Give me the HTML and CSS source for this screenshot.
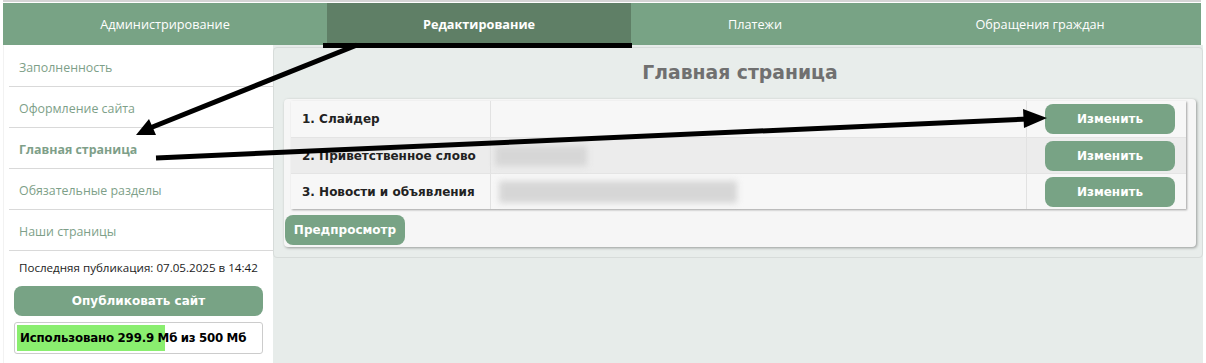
FILE: index.html
```html
<!DOCTYPE html>
<html lang="ru">
<head>
<meta charset="utf-8">
<title>Редактирование</title>
<link rel="stylesheet" href="styles.css">
</head>
<body>
<div class="page">
  <div class="topline"></div>
  <nav class="nav">
    <a class="tab">Администрирование</a>
    <a class="tab active">Редактирование</a>
    <a class="tab">Платежи</a>
    <a class="tab">Обращения граждан</a>
  </nav>
  <div class="layout">
    <aside class="sidebar">
      <ul class="menu">
        <li>Заполненность</li>
        <li>Оформление сайта</li>
        <li class="current">Главная страница</li>
        <li>Обязательные разделы</li>
        <li>Наши страницы</li>
      </ul>
      <div class="pub">Последняя публикация: 07.05.2025 в 14:42</div>
      <button class="btn publish">Опубликовать сайт</button>
      <div class="quota">
        <div class="quota-fill" style="width:59.98%"></div>
        <span class="quota-text">Использовано 299.9 Мб из 500 Мб</span>
      </div>
    </aside>
    <main class="main">
      <section class="box">
        <h1 class="title">Главная страница</h1>
        <div class="panel">
          <div class="table">
            <div class="row">
              <div class="cell name">1. Слайдер</div>
              <div class="cell val"></div>
              <div class="cell act"><button class="btn edit">Изменить</button></div>
            </div>
            <div class="row alt">
              <div class="cell name">2. Приветственное слово</div>
              <div class="cell val"><span class="blur b1"></span></div>
              <div class="cell act"><button class="btn edit">Изменить</button></div>
            </div>
            <div class="row">
              <div class="cell name">3. Новости и объявления</div>
              <div class="cell val"><span class="blur b2"></span></div>
              <div class="cell act"><button class="btn edit">Изменить</button></div>
            </div>
          </div>
          <button class="btn preview">Предпросмотр</button>
        </div>
      </section>
    </main>
  </div>
  <svg class="arrows" width="1206" height="363" viewBox="0 0 1206 363">
    <rect x="323" y="43" width="309" height="5" fill="#000"/>
    <line x1="357" y1="45" x2="150" y2="128" stroke="#000" stroke-width="5"/>
    <polygon points="136,135 156,135 149,119" fill="#000"/>
    <line x1="156" y1="158" x2="1028" y2="119" stroke="#000" stroke-width="5"/>
    <polygon points="1047,118 1024,128 1023,109" fill="#000"/>
  </svg>
</div>
</body>
</html>
```
FILE: styles.css
```css
* { box-sizing: border-box; }
html, body { margin: 0; padding: 0; background: #fff; }
body { font-family: "DejaVu Sans", Verdana, sans-serif; }

.page { position: relative; width: 1206px; height: 363px; overflow: hidden; padding: 0 3px; }

.topline { height: 2px; background: #d4d4d4; margin-right: 2px; }

.nav {
  display: grid;
  grid-template-columns: 324px 304px 248px 1fr;
  height: 42px;
  margin-top: 1px;
  margin-right: 2px;
  background: #78a385;
}
.tab {
  display: flex; align-items: center; justify-content: center;
  color: #fff; font-family: "Open Sans", "Noto Sans", sans-serif; font-size: 12.7px;
}
.tab.active { background: #5f7f66; font-weight: 700; }

.layout { display: flex; height: 318px; }

.sidebar {
  width: 270px; flex: none;
  border-left: 1px solid #f2f2f2;
  font-family: "Open Sans", "Noto Sans", sans-serif;
}
.menu { list-style: none; margin: 0; padding: 0 0 0 5px; }
.menu li {
  height: 41px;
  padding: 13px 0 0 10px;
  font-size: 12.4px;
  color: #7e9f89;
  border-bottom: 1px solid #d9d9d9;
}
.menu li:first-child { height: 42px; padding-top: 14px; }
.menu li.current { font-weight: 700; }

.pub { font-size: 11.6px; color: #1c1c1c; padding: 9px 0 0 15px; height: 35px; }

.btn {
  border: 0; background: #78a385; color: #fff;
  font-family: "DejaVu Sans", Verdana, sans-serif; font-weight: 700;
  border-radius: 8px; cursor: pointer;
}
.publish { display: block; width: 249px; height: 30px; margin-left: 10px; font-size: 12px; }

.quota {
  position: relative;
  width: 249px; height: 32px; margin: 6px 0 0 10px;
  border: 1px solid #cccccc; border-radius: 3px;
  padding: 2px;
  display: flex; align-items: center;
}
.quota-fill { position: absolute; left: 2px; top: 2px; bottom: 2px; background: #8aee6f; }
.quota-text {
  position: relative;
  font-family: "DejaVu Sans", Verdana, sans-serif;
  font-size: 11.8px; font-weight: 700; color: #000;
  padding-left: 3px; white-space: nowrap; letter-spacing: -0.15px; word-spacing: -0.5px;
}

.main { flex: 1; background: #e7ecea; padding-top: 2px; }

.box {
  height: 211px;
  border: 1px solid #d7dcda;
  border-radius: 4px;
  background: #e8edeb;
  padding: 0 6px 0 10px;
}
.title {
  margin: 0; height: 51px;
  text-align: center;
  font-size: 18.8px; font-weight: 700; color: #707070;
  padding-top: 14px;
  font-family: "DejaVu Sans", Verdana, sans-serif;
}

.panel {
  background: #f6f6f6;
  border-radius: 4px;
  box-shadow: 1px 1px 3px rgba(0,0,0,0.35);
  padding: 2px 10px 2px 6px;
  height: 148px;
}
.table {
  margin-left: 1px;
  box-shadow: 1px 1px 2px rgba(0,0,0,0.35);
  background: #f7f7f7;
}
.row { display: grid; grid-template-columns: 199px 1fr 160px; height: 36px; }
.row + .row { border-top: 1px solid #e4e4e4; }
.row.alt { background: #ececec; }
.cell { display: flex; align-items: center; }
.cell + .cell { border-left: 1px solid #e2e2e2; }
.name { padding-left: 11px; font-size: 12px; font-weight: 700; color: #222; }
.val { padding-left: 4px; }
.act { padding-left: 18px; }
.edit { width: 130px; height: 30px; font-size: 12px; }

.blur { display: block; height: 20px; background: #d6d6d6; filter: blur(3px); }
.b1 { width: 92px; }
.b2 { width: 238px; height: 22px; margin-left: 4px; }

.preview { margin: 6px 0 0 -5px; width: 120px; height: 30px; font-size: 12px; }

.arrows { position: absolute; left: 0; top: 0; pointer-events: none; }
```
